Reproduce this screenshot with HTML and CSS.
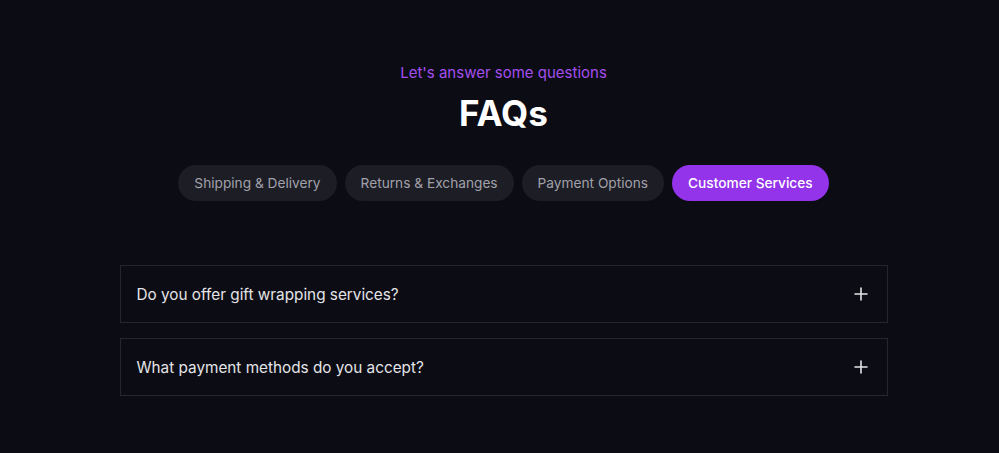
FILE: index.html
```html
<!DOCTYPE html>
<html lang="en">
<head>
<meta charset="utf-8">
<title>FAQs</title>
<link rel="stylesheet" href="styles.css">
</head>
<body>
<main class="faq">
  <p class="eyebrow">Let's answer some questions</p>
  <h1 class="title">FAQs</h1>
  <nav class="tabs">
    <button class="tab">Shipping &amp; Delivery</button>
    <button class="tab">Returns &amp; Exchanges</button>
    <button class="tab">Payment Options</button>
    <button class="tab tab-active">Customer Services</button>
  </nav>
  <section class="list">
    <div class="item">
      <span class="question">Do you offer gift wrapping services?</span>
      <svg class="plus" width="16" height="16" viewBox="0 0 16 16" fill="none" stroke="currentColor" stroke-width="1.6" stroke-linecap="round"><path d="M8 2v12M2 8h12"/></svg>
    </div>
    <div class="item">
      <span class="question">What payment methods do you accept?</span>
      <svg class="plus" width="16" height="16" viewBox="0 0 16 16" fill="none" stroke="currentColor" stroke-width="1.6" stroke-linecap="round"><path d="M8 2v12M2 8h12"/></svg>
    </div>
  </section>
</main>
</body>
</html>
```
FILE: styles.css
```css
* { box-sizing: border-box; }
html, body {
  margin: 0;
  background: #0c0c14;
  font-family: Inter, "Noto Sans", sans-serif;
  -webkit-font-smoothing: antialiased;
}
.faq {
  display: flex;
  flex-direction: column;
  align-items: center;
  padding: 63px 0 0 8px;
}
.eyebrow {
  margin: 0;
  color: #a44ef0;
  font-size: 15px;
  line-height: 20px;
}
.title {
  margin: 10px 0 0;
  color: #ffffff;
  font-size: 35px;
  line-height: 40px;
  font-weight: 700;
}
.tabs {
  display: flex;
  gap: 8px;
  margin-top: 32px;
}
.tab {
  height: 36px;
  padding: 0 16px;
  border: 0;
  border-radius: 999px;
  background: #1d1d25;
  color: #a1a1aa;
  font-family: inherit;
  font-size: 13.7px;
  font-weight: 400;
}
.tab-active {
  background: #9333ea;
  color: #ffffff;
  font-weight: 500;
}
.list {
  width: 768px;
  margin-top: 64px;
  display: flex;
  flex-direction: column;
  gap: 15px;
}
.item {
  height: 58px;
  display: flex;
  align-items: center;
  justify-content: space-between;
  padding: 0 18px 0 16px;
  border: 1px solid #26262e;
  color: #e4e4e7;
}
.question {
  font-size: 15.3px;
  font-weight: 400;
}
.plus { color: #e4e4e7; }
```
